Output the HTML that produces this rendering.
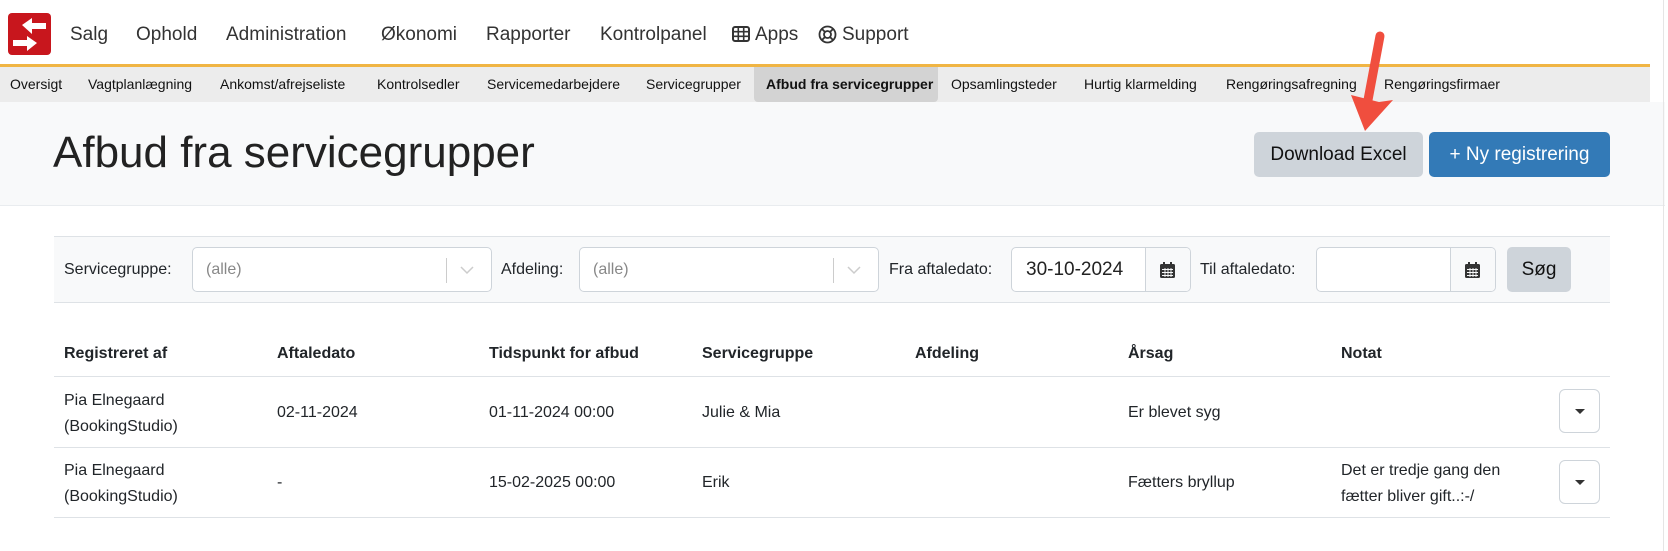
<!DOCTYPE html>
<html><head><meta charset="utf-8"><style>
*{box-sizing:border-box;margin:0;padding:0}
body{width:1668px;height:551px;background:#fff;font-family:"Liberation Sans",sans-serif;color:#212529;position:relative;overflow:hidden}
.a{position:absolute;white-space:nowrap}
.nav{font-size:19px;color:#333;top:24px}
.sub{font-size:14px;color:#111;top:76px}
.lbl{font-size:16px;top:261px}
.box{position:absolute;border:1px solid #ced4da;border-radius:5px;background:#fff}
.th{font-size:16px;font-weight:bold;top:345px}
.td{font-size:16px;line-height:26px}
.hr{position:absolute;left:54px;width:1556px;height:1px;background:#dee2e6}
.dd{position:absolute;width:41px;height:44px;border:1px solid #ced4da;border-radius:6px;background:#fff}
.dd:after{content:"";position:absolute;left:15px;top:19px;border-left:5px solid transparent;border-right:5px solid transparent;border-top:5px solid #333}
</style></head><body>
<svg class="a" style="left:8px;top:13px" width="43" height="42" viewBox="0 0 43 42">
<rect width="43" height="42" rx="4" fill="#c8161d"/>
<polygon points="14,12 24,5 24,10 38,10 38,16 24,16 24,21" fill="#fff"/>
<polygon points="29,30 19,23 19,27 5,27 5,33 19,33 19,38" fill="#fff"/>
</svg>
<div class="a nav" style="left:70px">Salg</div>
<div class="a nav" style="left:136px">Ophold</div>
<div class="a nav" style="left:226px">Administration</div>
<div class="a nav" style="left:381px">Økonomi</div>
<div class="a nav" style="left:486px">Rapporter</div>
<div class="a nav" style="left:600px">Kontrolpanel</div>
<svg class="a" style="left:732px;top:26px" width="18" height="16" viewBox="0 0 18 16"><rect x="1" y="1" width="16" height="14" rx="2" fill="none" stroke="#333" stroke-width="2"/><path d="M1 5.7H17M1 10.3H17M6.3 1V15M11.7 1V15" stroke="#333" stroke-width="1.6"/></svg>
<div class="a nav" style="left:755px">Apps</div>
<svg class="a" style="left:818px;top:25px" width="19" height="19" viewBox="0 0 19 19"><circle cx="9.5" cy="9.5" r="8" fill="none" stroke="#333" stroke-width="1.8"/><circle cx="9.5" cy="9.5" r="3.5" fill="none" stroke="#333" stroke-width="1.8"/><path d="M4 4L7 7M15 4L12 7M4 15L7 12M15 15L12 12" stroke="#333" stroke-width="1.8"/></svg>
<div class="a nav" style="left:842px">Support</div>
<div class="a" style="left:0;top:64px;width:1650px;height:3px;background:#f0b544"></div>
<div class="a" style="left:0;top:67px;width:1650px;height:35px;background:#ececec"></div>
<div class="a" style="left:754px;top:67px;width:184px;height:35px;background:#d3d3d3;border-radius:0 0 4px 4px"></div>
<div class="a sub" style="left:10px">Oversigt</div>
<div class="a sub" style="left:88px">Vagtplanlægning</div>
<div class="a sub" style="left:220px">Ankomst/afrejseliste</div>
<div class="a sub" style="left:377px">Kontrolsedler</div>
<div class="a sub" style="left:487px">Servicemedarbejdere</div>
<div class="a sub" style="left:646px">Servicegrupper</div>
<div class="a sub" style="left:766px;font-weight:bold">Afbud fra servicegrupper</div>
<div class="a sub" style="left:951px">Opsamlingsteder</div>
<div class="a sub" style="left:1084px">Hurtig klarmelding</div>
<div class="a sub" style="left:1226px">Rengøringsafregning</div>
<div class="a sub" style="left:1384px">Rengøringsfirmaer</div>
<div class="a" style="left:0;top:102px;width:1665px;height:104px;background:#f8f9fa;border-bottom:1px solid #e9ecef"></div>
<div class="a" style="left:53px;top:128px;font-size:44px;color:#222">Afbud fra servicegrupper</div>
<div class="a" style="left:1254px;top:132px;width:169px;height:45px;background:#ced4da;border-radius:5px;font-size:19px;line-height:45px;text-align:center;color:#111">Download Excel</div>
<div class="a" style="left:1429px;top:132px;width:181px;height:45px;background:#337ab7;border-radius:5px;font-size:19px;line-height:45px;text-align:center;color:#fff">+ Ny registrering</div>
<svg class="a" style="left:1340px;top:25px" width="60" height="115" viewBox="0 0 60 115"><path d="M40 11L28 75" stroke="#f04e3e" stroke-width="9" stroke-linecap="round"/><polygon points="11,70 39,77 53,75 25,106" fill="#f04e3e"/></svg>
<div class="a" style="left:54px;top:236px;width:1556px;height:67px;background:#f8f9fa;border-top:1px solid #dee2e6;border-bottom:1px solid #dee2e6"></div>
<div class="a lbl" style="left:64px">Servicegruppe:</div>
<div class="box" style="left:192px;top:247px;width:300px;height:45px"><span class="a" style="left:13px;top:13px;color:#888;font-size:16px">(alle)</span><span class="a" style="left:253px;top:10px;width:1px;height:25px;background:#ccc"></span><svg class="a" style="left:267px;top:18px" width="14" height="9"><path d="M1 1L7 7L13 1" fill="none" stroke="#ccc" stroke-width="1.5"/></svg></div>
<div class="a lbl" style="left:501px">Afdeling:</div>
<div class="box" style="left:579px;top:247px;width:300px;height:45px"><span class="a" style="left:13px;top:13px;color:#888;font-size:16px">(alle)</span><span class="a" style="left:253px;top:10px;width:1px;height:25px;background:#ccc"></span><svg class="a" style="left:267px;top:18px" width="14" height="9"><path d="M1 1L7 7L13 1" fill="none" stroke="#ccc" stroke-width="1.5"/></svg></div>
<div class="a lbl" style="left:889px">Fra aftaledato:</div>
<div class="box" style="left:1011px;top:247px;width:180px;height:45px;overflow:hidden"><span class="a" style="left:14px;top:11px;font-size:19px;color:#222;width:112px;overflow:hidden">30-10-2024</span><span class="a" style="left:133px;top:0;width:46px;height:45px;background:#f8f9fa;border-left:1px solid #ced4da"></span><svg class="a" style="left:148px;top:14px" width="15" height="16"><rect x="0" y="2" width="15" height="14" rx="1.5" fill="#333"/><rect x="3" y="0" width="2" height="4" fill="#333"/><rect x="10" y="0" width="2" height="4" fill="#333"/><path d="M2 7.5H13M2 10.5H13M2 13.5H13M5 6V15M8 6V15M11 6V15" stroke="#f8f9fa" stroke-width="0.9"/></svg></div>
<div class="a lbl" style="left:1200px">Til aftaledato:</div>
<div class="box" style="left:1316px;top:247px;width:180px;height:45px;overflow:hidden"><span class="a" style="left:133px;top:0;width:46px;height:45px;background:#f8f9fa;border-left:1px solid #ced4da"></span><svg class="a" style="left:148px;top:14px" width="15" height="16"><rect x="0" y="2" width="15" height="14" rx="1.5" fill="#333"/><rect x="3" y="0" width="2" height="4" fill="#333"/><rect x="10" y="0" width="2" height="4" fill="#333"/><path d="M2 7.5H13M2 10.5H13M2 13.5H13M5 6V15M8 6V15M11 6V15" stroke="#f8f9fa" stroke-width="0.9"/></svg></div>
<div class="a" style="left:1507px;top:247px;width:64px;height:45px;background:#ced4da;border-radius:5px;font-size:19px;line-height:45px;text-align:center;color:#111">Søg</div>
<div class="a th" style="left:64px">Registreret af</div>
<div class="a th" style="left:277px">Aftaledato</div>
<div class="a th" style="left:489px">Tidspunkt for afbud</div>
<div class="a th" style="left:702px">Servicegruppe</div>
<div class="a th" style="left:915px">Afdeling</div>
<div class="a th" style="left:1128px">Årsag</div>
<div class="a th" style="left:1341px">Notat</div>
<div class="hr" style="top:376px"></div>
<div class="a td" style="left:64px;top:388px">Pia Elnegaard<br>(BookingStudio)</div>
<div class="a td" style="left:277px;top:400px">02-11-2024</div>
<div class="a td" style="left:489px;top:400px">01-11-2024 00:00</div>
<div class="a td" style="left:702px;top:400px">Julie &amp; Mia</div>
<div class="a td" style="left:1128px;top:400px">Er blevet syg</div>
<div class="dd" style="left:1559px;top:389px"></div>
<div class="hr" style="top:447px"></div>
<div class="a td" style="left:64px;top:458px">Pia Elnegaard<br>(BookingStudio)</div>
<div class="a td" style="left:277px;top:470px">-</div>
<div class="a td" style="left:489px;top:470px">15-02-2025 00:00</div>
<div class="a td" style="left:702px;top:470px">Erik</div>
<div class="a td" style="left:1128px;top:470px">Fætters bryllup</div>
<div class="a td" style="left:1341px;top:458px">Det er tredje gang den<br>fætter bliver gift..:-/</div>
<div class="dd" style="left:1559px;top:460px"></div>
<div class="hr" style="top:517px"></div>
<div class="a" style="left:1663px;top:0;width:1px;height:551px;background:#e5e5e5"></div>
</body></html>
